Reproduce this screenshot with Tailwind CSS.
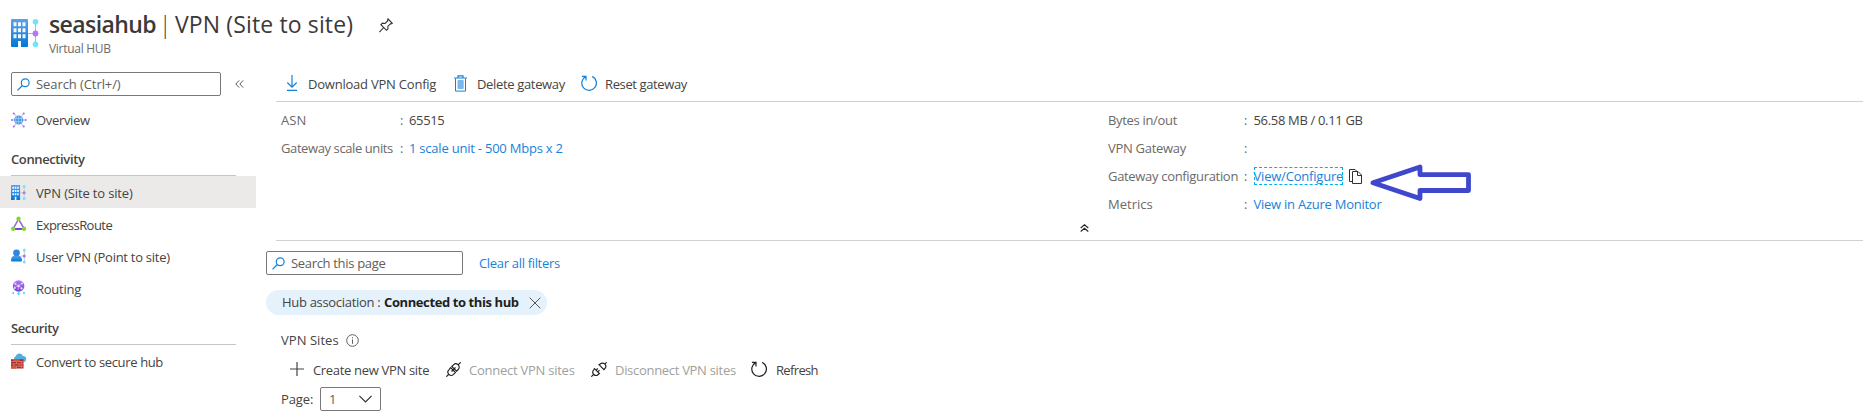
<!DOCTYPE html>
<html lang="en">
<head>
<meta charset="utf-8">
<title>seasiahub | VPN (Site to site)</title>
<script src="https://cdn.jsdelivr.net/npm/@tailwindcss/browser@4"></script>
</head>
<body class="relative h-[416px] w-[1863px] overflow-hidden bg-white font-['Open_Sans','Noto_Sans',sans-serif] text-[13px] leading-[18px] whitespace-nowrap text-[#454442]">
<svg class="absolute size-0">
  <defs>
    <linearGradient id="blue" x1="0" y1="0" x2="0" y2="1"><stop offset="0" stop-color="#5ea0ef"/><stop offset="1" stop-color="#0078d4"/></linearGradient>
    <linearGradient id="violet" x1="0" y1="0" x2="0" y2="1"><stop offset="0" stop-color="#b77af4"/><stop offset="1" stop-color="#773adc"/></linearGradient>
    <symbol id="hub" viewBox="0 0 28 28">
      <path d="M17 14.5H24M24.500 3V25" stroke="#b4b4b4" stroke-width="1" fill="none"/>
      <rect width="17" height="28" rx="1" fill="url(#blue)"/>
      <path d="M2.500 3.200h3v4h-3zM7 3.200h3v4H7zM11.500 3.200h3v4h-3zM2.500 9.200h3v4h-3zM7 9.200h3v4H7zM11.500 9.200h3v4h-3zM2.500 15.200h3v4h-3zM7 15.200h3v4H7zM11.500 15.200h3v4h-3zM7 22h3v6H7z" fill="#f4f9fe"/>
      <circle cx="24.500" cy="2.800" r="2.800" fill="#6fe4ff"/><circle cx="24.500" cy="14.500" r="2.900" fill="#b07bf2"/><circle cx="24.500" cy="25.200" r="2.800" fill="#6fe4ff"/>
    </symbol>
    <symbol id="search" viewBox="0 0 13 13"><circle cx="8.200" cy="4.700" r="3.900" fill="none" stroke="#1683d8" stroke-width="1.200"/><path d="M5.400 7.500L.5 12.400" stroke="#1683d8" stroke-width="1.300"/></symbol>
    <symbol id="reset" viewBox="0 0 16 16"><path d="M11.200 1.400A7.300 7.300 0 1 1 4.600 1.600M.9 1.300H5V5.400" fill="none" stroke="currentColor" stroke-width="1.200"/></symbol>
  </defs>
</svg>

<header class="flex h-[72px] items-start pl-[11px]">
  <svg class="mt-[19px] size-7"><use href="#hub"/></svg>
  <div class="ml-[10px] pt-[9px]">
    <h1 class="flex h-[30px] items-center text-[23px] leading-[30px] text-[#3b3a39]">
      <span class="w-[108px] font-semibold tracking-[-0.58px]">seasiahub</span>
      <span class="w-[18px] pl-[2px] font-light">|</span>
      <span class="w-[204px] tracking-[0.13px]">VPN (Site to site)</span>
      <svg class="mt-[3px] h-[15px] w-[14px]" viewBox="0 0 14 15" fill="none" stroke="#323130" stroke-width="1.100"><path d="M9 1l4.300 4.300-1.300.6-.6-.1-2.600 2.600.2 2.400-1.500 1.500L1.900 6.700l1.500-1.500 2.700.3L8.600 3l-.1-.9zM4.700 9.500L.4 14.200"/></svg>
    </h1>
    <p class="h-[18px] pt-px text-[12px] leading-[18px] tracking-[-0.29px] text-[#6b6a68]">Virtual HUB</p>
  </div>
</header>

<div class="flex">
  <aside class="w-[256px] shrink-0">
    <div class="flex items-center pl-[11px]">
      <div class="flex h-6 w-[210px] items-center rounded-[2px] border border-[#7a7876] pl-[5px]">
        <svg class="size-[13px]"><use href="#search"/></svg>
        <span class="ml-[6px] tracking-[-0.08px] text-[#605e5c]">Search (Ctrl+/)</span>
      </div>
      <svg class="ml-[14px] h-2 w-[9px]" viewBox="0 0 9 8" fill="none" stroke="#555"><path d="M4.200.4L.8 4l3.400 3.600M8.200.4L4.800 4l3.400 3.600"/></svg>
    </div>
    <nav class="mt-2">
      <a class="flex h-8 items-center pl-[11px]">
        <svg class="mr-[9px] size-4" viewBox="0 0 16 16"><path d="M3 1.500l2.500 3M12.500 1.500l-2.500 3M3 14.500l2.500-3M12.500 14.500l-2.500-3M1 8h2M12 8h3" stroke="#c3a5ee" stroke-width=".9"/><circle cx="7.700" cy="8" r="4.600" fill="#3f93e4"/><path d="M3.500 6.300h8.400M3.500 9.700h8.400M7.700 3.400v9.200M5.500 4c-1 2.500-1 5.500 0 8M9.900 4c1 2.500 1 5.500 0 8" stroke="#b4d9fa" stroke-width=".7" fill="none"/><g fill="#a46cec"><circle cx="2.800" cy="1.500" r="1.100"/><circle cx="12.700" cy="1.500" r="1.100"/><circle cx="2.800" cy="14.500" r="1.100"/><circle cx="12.700" cy="14.500" r="1.100"/><circle cx="1" cy="8" r="1"/><circle cx="14.700" cy="8" r="1"/></g></svg>
        <span class="tracking-[-0.32px]">Overview</span></a>
      <h2 class="mr-5 ml-[11px] flex h-10 items-center border-b border-[#c6c5c4] pt-[7px] font-semibold tracking-[-0.38px]">Connectivity</h2>
      <a class="flex h-8 items-center bg-[#ebeae9] pl-[11px]">
        <svg class="mr-[10px] size-[15px]"><use href="#hub"/></svg>
        <span class="pt-px tracking-[-0.15px]">VPN (Site to site)</span></a>
      <a class="flex h-8 items-center pl-[11px]">
        <svg class="mr-[9px] size-4" viewBox="0 0 16 16"><path d="M7.500 3L2.200 12.800h11z" fill="none" stroke="#9a62ea" stroke-width="1.500"/><path d="M2.200 13h11" stroke="#6d37cf" stroke-width="1.600"/><g fill="#86d633"><circle cx="7.500" cy="2.800" r="2.200"/><circle cx="2.200" cy="12.800" r="2.200"/><circle cx="13" cy="12.800" r="2.200"/></g></svg>
        <span class="pt-px tracking-[-0.55px]">ExpressRoute</span></a>
      <a class="flex h-8 items-center pl-[11px]">
        <svg class="mr-[9px] size-4" viewBox="0 0 16 16"><path d="M0 12.500C0 9.500 1.500 8 3.500 7.500h4C9.500 8 11 9.500 11 12.500q0 1-1 1H1q-1 0-1-1z" fill="url(#blue)"/><circle cx="5.500" cy="4.800" r="3.400" fill="#2f86de"/><path d="M10 8h3.300M13.300 2v12" stroke="#b4b4b4" stroke-width=".7"/><circle cx="13.300" cy="2" r="1.500" fill="#6fe4ff"/><circle cx="13.300" cy="8" r="1.600" fill="#b07bf2"/><circle cx="13.300" cy="14" r="1.500" fill="#6fe4ff"/></svg>
        <span class="pt-px tracking-[-0.27px]">User VPN (Point to site)</span></a>
      <a class="flex h-8 items-center pl-[11px]">
        <svg class="mr-[9px] size-4" viewBox="0 0 16 16"><circle cx="7.600" cy="6" r="5.800" fill="url(#violet)"/><path d="M4 3.500l3.500 2.200L11 3.500M3 7.500l4.500-1.800 4 2.500M7.500 5.700L7 10" stroke="#d7bff8" stroke-width=".7" fill="none"/><g fill="#e8dafb"><circle cx="4.300" cy="3.800" r="1"/><circle cx="11" cy="3.600" r="1"/><circle cx="7.500" cy="6" r="1.300"/><circle cx="3.800" cy="8" r="1"/><circle cx="10.500" cy="8.500" r="1.100"/></g><path d="M7.600 11.500v3M3 13H1.500M12 13h2" stroke="#50d8f4" stroke-width="1.200"/><path d="M5.800 13.300h3.600L7.600 15.800zM3 11.500v3L.8 13zM12.200 11.500v3l2.200-1.500z" fill="#50d8f4"/></svg>
        <span class="pt-px tracking-[-0.25px]">Routing</span></a>
      <h2 class="mr-5 ml-[11px] flex h-[41px] items-center border-b border-[#c6c5c4] pt-[7px] font-semibold tracking-[-0.4px]">Security</h2>
      <a class="flex h-8 items-center pt-px pl-[11px]">
        <svg class="mr-[9px] size-4 -translate-y-px" viewBox="0 0 16 16"><path d="M5 8a2.500 2.500 0 0 1-.3-4.800A3.800 3.800 0 0 1 11.900 3 3 3 0 0 1 12.500 9z" fill="#4fb0dc"/><rect y="6.200" width="12.500" height="9.300" fill="#b3282d"/><path d="M0 8.500h12.500M0 10.800h12.500M0 13.200h12.500M3 6.200v2.300M8 6.200v2.300M5.500 8.500v2.300M10.300 8.500v2.300M3 10.800v2.400M8 10.800v2.400M5.500 13.200v2.300M10.300 13.200v2.300" stroke="#e0a090" stroke-width=".6"/><path d="M3.300 6.200h4.300v2H3.300zM8.400 11.200h4.100v1.700H8.400zM0 13.600h5v1.900H0z" fill="#cf5a34"/></svg>
        <span class="tracking-[-0.36px]">Convert to secure hub</span></a>
    </nav>
  </aside>

  <main class="w-[1607px] pl-[10px]">
    <div class="ml-[10px] flex h-[30px] items-center border-b border-[#d2d1d0] pb-[6px] pl-[10px]">
      <svg class="-mt-px h-4 w-[12px]" viewBox="0 0 12 16" fill="none" stroke="#1480d8" stroke-width="1.200"><path d="M6 0v12M1.300 7.500L6 12.200l4.700-4.700M1 15.400h10"/></svg>
      <span class="ml-[10px] w-[146px] tracking-[-0.22px]">Download VPN Config</span>
      <svg class="-mt-px h-[17px] w-[13px]" viewBox="0 0 13 17" fill="none" stroke="#1480d8"><path d="M0 3h13M4 3V.8h5V3" stroke-width="1.200"/><path d="M1.500 3.500v12.600h10V3.500"/><path d="M4 5.500h5.200v8H4z" fill="#7ab7ea" stroke="#7ab7ea"/></svg>
      <span class="ml-[10px] w-[104px] tracking-[-0.34px]">Delete gateway</span>
      <svg class="-mt-px size-4 text-[#1480d8]"><use href="#reset"/></svg>
      <span class="ml-2 tracking-[-0.38px]">Reset gateway</span>
    </div>

    <section class="relative ml-[10px] flex h-[139px] border-b border-[#d2d1d0] pt-1 pl-[5px] text-[#6b6a68]">
      <dl class="grid w-[828px] grid-cols-[119px_9px_1fr] auto-rows-[28px] items-center">
        <dt class="tracking-[0.1px]">ASN</dt><dd>:</dd><dd class="tracking-[-0.35px] text-[#454442]">65515</dd>
        <dt class="tracking-[-0.4px]">Gateway scale units</dt><dd>:</dd><dd class="tracking-[-0.22px] text-[#1a82d8]">1 scale unit - 500 Mbps x 2</dd>
      </dl>
      <dl class="-ml-px grid grid-cols-[136px_9.5px_auto] auto-rows-[28px] items-center">
        <dt class="tracking-[-0.32px]">Bytes in/out</dt><dd>:</dd><dd class="tracking-[-0.33px] text-[#454442]">56.58 MB / 0.11 GB</dd>
        <dt class="tracking-[-0.29px]">VPN Gateway</dt><dd>:</dd><dd></dd>
        <dt class="tracking-[-0.32px]">Gateway configuration</dt><dd>:</dd>
        <dd class="flex items-center">
          <span class="h-[18px] w-[89px] leading-[18px] tracking-[-0.2px] text-[#1a82d8] outline-1 -outline-offset-1 outline-dashed outline-[#00b0f0]">View/Configure</span>
          <svg class="ml-[6px] h-[15px] w-[13px]" viewBox="0 0 13 15" fill="none" stroke="#323130"><path d="M3 12.500H.5V.5H6L8 2.500M3.500 2.500H9l3.500 3.500v8.500h-9zM8.500 2.500V6.500h4"/></svg>
          <svg class="ml-2 -mt-1 -mb-3 h-[38px] w-[102px] translate-y-1 overflow-visible" viewBox="0 0 102 38" fill="none" stroke="#3f48cc" stroke-width="4.800" stroke-linejoin="round"><path d="M3 17.700L50 2V9.700H98.500V25.500H50V33.500z"/></svg>
        </dd>
        <dt>Metrics</dt><dd>:</dd><dd class="tracking-[-0.25px] text-[#1a82d8]">View in Azure Monitor</dd>
      </dl>
      <svg class="absolute top-[122px] left-[804px] h-2 w-[9px]" viewBox="0 0 9 8" fill="none" stroke="#222" stroke-width="1.100"><path d="M.7 4L4.500.8 8.300 4M.7 7.500l3.800-3.200 3.800 3.200"/></svg>
    </section>

    <div class="mt-[10px] flex h-6 items-center">
      <div class="flex h-6 w-[197px] items-center rounded-[2px] border border-[#7a7876] pl-[5px]">
        <svg class="size-[13px]"><use href="#search"/></svg>
        <span class="ml-[6px] tracking-[-0.32px] text-[#605e5c]">Search this page</span>
      </div>
      <a class="ml-4 tracking-[-0.32px] text-[#1a82d8]">Clear all filters</a>
    </div>

    <div class="mt-[15px] flex h-[25px] w-[281px] items-center rounded-full bg-[#e5f1fb] pl-4">
      <span class="w-[102px] pb-px tracking-[-0.31px]">Hub association :</span>
      <b class="w-[145px] pb-px tracking-[-0.4px] text-[#201f1e]">Connected to this hub</b>
      <svg class="size-3" viewBox="0 0 12 12" stroke="#555"><path d="M.7.7l10.600 10.600M11.300.7L.7 11.300"/></svg>
    </div>

    <div class="mt-4 ml-[15px] flex h-[18px] items-center">
      <span class="w-[65px] pb-px tracking-[0.04px]">VPN Sites</span>
      <svg class="size-[13px]" viewBox="0 0 13 13" fill="none" stroke="#605e5c"><circle cx="6.500" cy="6.500" r="5.800"/><path d="M6.500 5.500v4.300M6.500 3.200v1.200"/></svg>
    </div>

    <div class="mt-3 ml-6 flex h-[18px] items-center">
      <svg class="mt-[-2px] size-[14px]" viewBox="0 0 14 14" stroke="#444" stroke-width="1.200"><path d="M7 0v14M0 7h14"/></svg>
      <span class="ml-[9px] w-[133px] tracking-[-0.32px]">Create new VPN site</span>
      <svg class="mt-[-2px] size-[15px]" viewBox="0 0 15 15" fill="none" stroke="#222" stroke-width="1.150"><path d="M.3 14.700l2.700-2.700M12.400 2.600L14.700.3M4.600 5.700l4.800 4.800-1.900 1.900c-1.400 1.300-3.300 1.300-4.600 0s-1.300-3.300 0-4.600zM5.800 4.500l1.700-1.700c1.300-1.300 3.300-1.300 4.700 0s1.300 3.400 0 4.700l-1.700 1.700zM5.500 9.500L9.500 5.500"/></svg>
      <span class="ml-2 w-[122px] tracking-[-0.25px] text-[#a19f9d]">Connect VPN sites</span>
      <svg class="mt-[-2px] h-[15px] w-4" viewBox="0 0 16 15" fill="none" stroke="#222" stroke-width="1.150"><path d="M.3 14.700l2.200-2.200M13.800 2.200L15.700.3M3.500 6.600l4.900 4.900-1.200 1c-1.400 1.200-3.200 1.200-4.400 0s-1.200-3.200-.3-4.500zM8 2.700l4.900 4.900 1-1.100c1.200-1.300 1.200-3.100 0-4.300s-3.200-1.200-4.600-.3zM5.100 8.200l1.700-1.700M6.800 9.900l1.700-1.700"/></svg>
      <span class="ml-2 w-[136px] tracking-[-0.3px] text-[#a19f9d]">Disconnect VPN sites</span>
      <svg class="mt-[-3px] size-4 text-[#222]"><use href="#reset"/></svg>
      <span class="ml-[9px] tracking-[-0.65px]">Refresh</span>
    </div>

    <div class="mt-2 ml-[15px] flex h-6 items-center">
      <span class="w-[39px] tracking-[-0.1px]">Page:</span>
      <div class="flex h-6 w-[61px] items-center justify-between rounded-[2px] border border-[#7a7876] pr-2 pl-[8px]">
        <span class="text-[#605e5c]">1</span>
        <svg class="h-2 w-[13px]" viewBox="0 0 13 8" fill="none" stroke="#323130" stroke-width="1.200"><path d="M.4.900L6.500 7l6.100-6.100"/></svg>
      </div>
    </div>
  </main>
</div>
</body>
</html>
